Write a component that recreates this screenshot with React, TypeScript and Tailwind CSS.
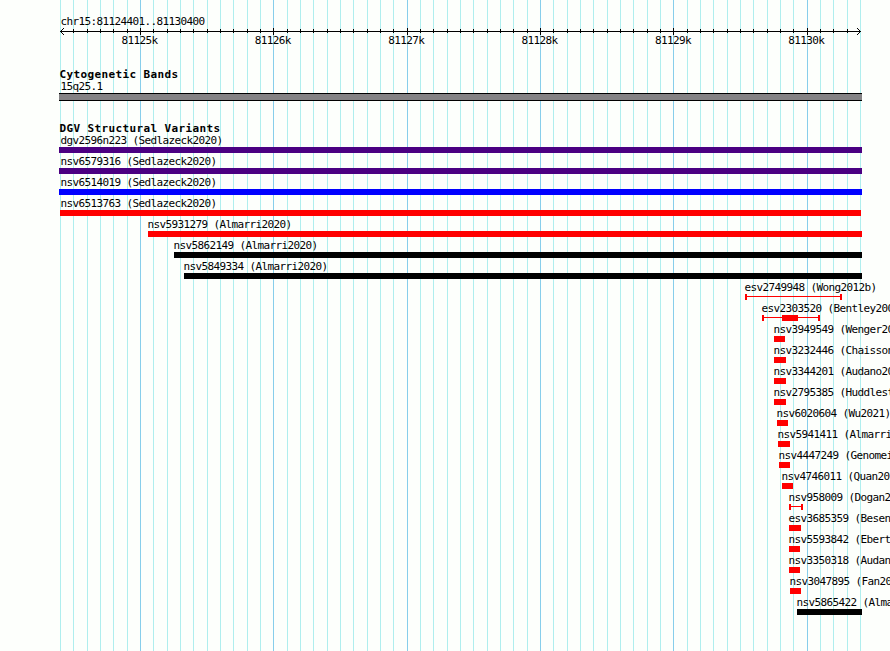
import clsx from 'clsx';

type Glyph = 'box' | 'span';

interface Variant {
  name: string;
  start: number;
  end: number;
  color: string;
  glyph?: Glyph;
  box?: [number, number];
  labelX?: number;
}

const PURPLE = 'bg-[#4b0082]';
const BLUE = 'bg-[#0000ff]';
const RED = 'bg-[#ff0000]';
const BLACK = 'bg-black';

const variants: Variant[] = [
  { name: 'dgv2596n223 (Sedlazeck2020)', start: 59, end: 862, color: PURPLE, labelX: 60.4 },
  { name: 'nsv6579316 (Sedlazeck2020)', start: 59, end: 862, color: PURPLE, labelX: 60.4 },
  { name: 'nsv6514019 (Sedlazeck2020)', start: 59, end: 862, color: BLUE, labelX: 60.4 },
  { name: 'nsv6513763 (Sedlazeck2020)', start: 60, end: 861, color: RED, labelX: 60.4 },
  { name: 'nsv5931279 (Almarri2020)', start: 148, end: 862, color: RED },
  { name: 'nsv5862149 (Almarri2020)', start: 174, end: 862, color: BLACK },
  { name: 'nsv5849334 (Almarri2020)', start: 184, end: 862, color: BLACK },
  { name: 'esv2749948 (Wong2012b)', start: 745, end: 842, color: RED, glyph: 'span' },
  { name: 'esv2303520 (Bentley2008)', start: 762, end: 820, color: RED, glyph: 'span', box: [782, 798] },
  { name: 'nsv3949549 (Wenger2019)', start: 774, end: 785, color: RED },
  { name: 'nsv3232446 (Chaisson2019)', start: 774, end: 786, color: RED },
  { name: 'nsv3344201 (Audano2019)', start: 774, end: 786, color: RED },
  { name: 'nsv2795385 (Huddleston2016)', start: 774, end: 786, color: RED },
  { name: 'nsv6020604 (Wu2021)', start: 777, end: 788, color: RED },
  { name: 'nsv5941411 (Almarri2020)', start: 778, end: 790, color: RED },
  { name: 'nsv4447249 (Genomeinabottle)', start: 779, end: 790, color: RED },
  { name: 'nsv4746011 (Quan2020)', start: 782, end: 793, color: RED },
  { name: 'nsv958009 (Dogan2014)', start: 789, end: 803, color: RED, glyph: 'span' },
  { name: 'esv3685359 (Besenbacher2016)', start: 789, end: 801, color: RED },
  { name: 'nsv5593842 (Ebert2021)', start: 789, end: 800, color: RED },
  { name: 'nsv3350318 (Audano2019)', start: 789, end: 800, color: RED },
  { name: 'nsv3047895 (Fan2022)', start: 790, end: 801, color: RED },
  { name: 'nsv5865422 (Almarri2020)', start: 797, end: 862, color: BLACK },
];

const ticks = Array.from({ length: 61 }, (_, i) => ({
  x: Math.round(60 + (i * 40) / 3),
  major: i % 10 === 6,
}));

const tickLabels = ['81125k', '81126k', '81127k', '81128k', '81129k', '81130k'];

function GridLines() {
  return (
    <svg className="absolute inset-0" width={890} height={651} shapeRendering="crispEdges">
      {ticks.map(({ x, major }) => (
        <rect key={x} x={x} y={0} width={1} height={651} fill={major ? '#87ceeb' : '#afeeee'} />
      ))}
    </svg>
  );
}

function Ruler() {
  return (
    <svg className="block" width={890} height={7} shapeRendering="crispEdges">
      <rect x={60} y={3} width={801} height={1} />
      {ticks.slice(1, -1).map(({ x, major }) => (
        <rect key={x} x={x} y={major ? 0 : 1} width={1} height={major ? 7 : 4} />
      ))}
      {/* Arrow heads */}
      {[1, 2, 3].map((d) => (
        <g key={d}>
          <rect x={60 + d} y={3 - d} width={1} height={1} />
          <rect x={60 + d} y={3 + d} width={1} height={1} />
          <rect x={860 - d} y={3 - d} width={1} height={1} />
          <rect x={860 - d} y={3 + d} width={1} height={1} />
        </g>
      ))}
    </svg>
  );
}

function SpanGlyph({ start, end, box }: Variant) {
  return (
    <div className="flex h-1.5 items-start" style={{ width: end - start }}>
      <div className="h-1.5 w-0.5 bg-[#ff0000]" />
      <div className="mt-0.5 h-px flex-1 bg-[#ff0000]" />
      {box && (
        <>
          <div className="h-1.5 bg-[#ff0000]" style={{ width: box[1] - box[0] }} />
          <div className="mt-0.5 h-px bg-[#ff0000]" style={{ width: end - box[1] - 2 }} />
        </>
      )}
      <div className="h-1.5 w-0.5 bg-[#ff0000]" />
    </div>
  );
}

function VariantRow(variant: Variant) {
  const { name, start, end, color, glyph, labelX } = variant;
  return (
    <div className="h-[21px]">
      <div className="h-[13px]" style={{ paddingLeft: labelX ?? start - 0.6 }}>
        {name}
      </div>
      <div style={{ paddingLeft: start }}>
        {glyph === 'span' ? (
          <SpanGlyph {...variant} />
        ) : (
          <div className={clsx('h-1.5', color)} style={{ width: end - start }} />
        )}
      </div>
    </div>
  );
}

function TrackTitle({ children }: { children: string }) {
  return <h2 className="h-3 pl-[59.4px] font-bold tracking-[0.378px]">{children}</h2>;
}

export default function App() {
  return (
    <div className="relative h-[651px] w-[890px] overflow-hidden bg-[#fdfffc] font-['DejaVu_Sans_Mono',monospace] text-[11px] leading-[13px] tracking-[-0.622px] whitespace-nowrap text-black">
      <GridLines />
      <div className="relative pt-[15px]">
        <div className="h-[13px] pl-[60.4px]">chr15:81124401..81130400</div>
        <Ruler />
        <div className="-mt-px flex h-[34px] pl-[121.4px]">
          {tickLabels.map((label) => (
            <span key={label} className="w-[133.4px] shrink-0">
              {label}
            </span>
          ))}
        </div>

        <TrackTitle>Cytogenetic Bands</TrackTitle>
        <div className="h-[13px] pl-[60.4px]">15q25.1</div>
        <div className="mb-[21px] ml-[59px] h-2 w-[803px] border-y border-black bg-[#848284]" />

        <TrackTitle>DGV Structural Variants</TrackTitle>
        {variants.map((variant) => (
          <VariantRow key={variant.name} {...variant} />
        ))}
      </div>
    </div>
  );
}
